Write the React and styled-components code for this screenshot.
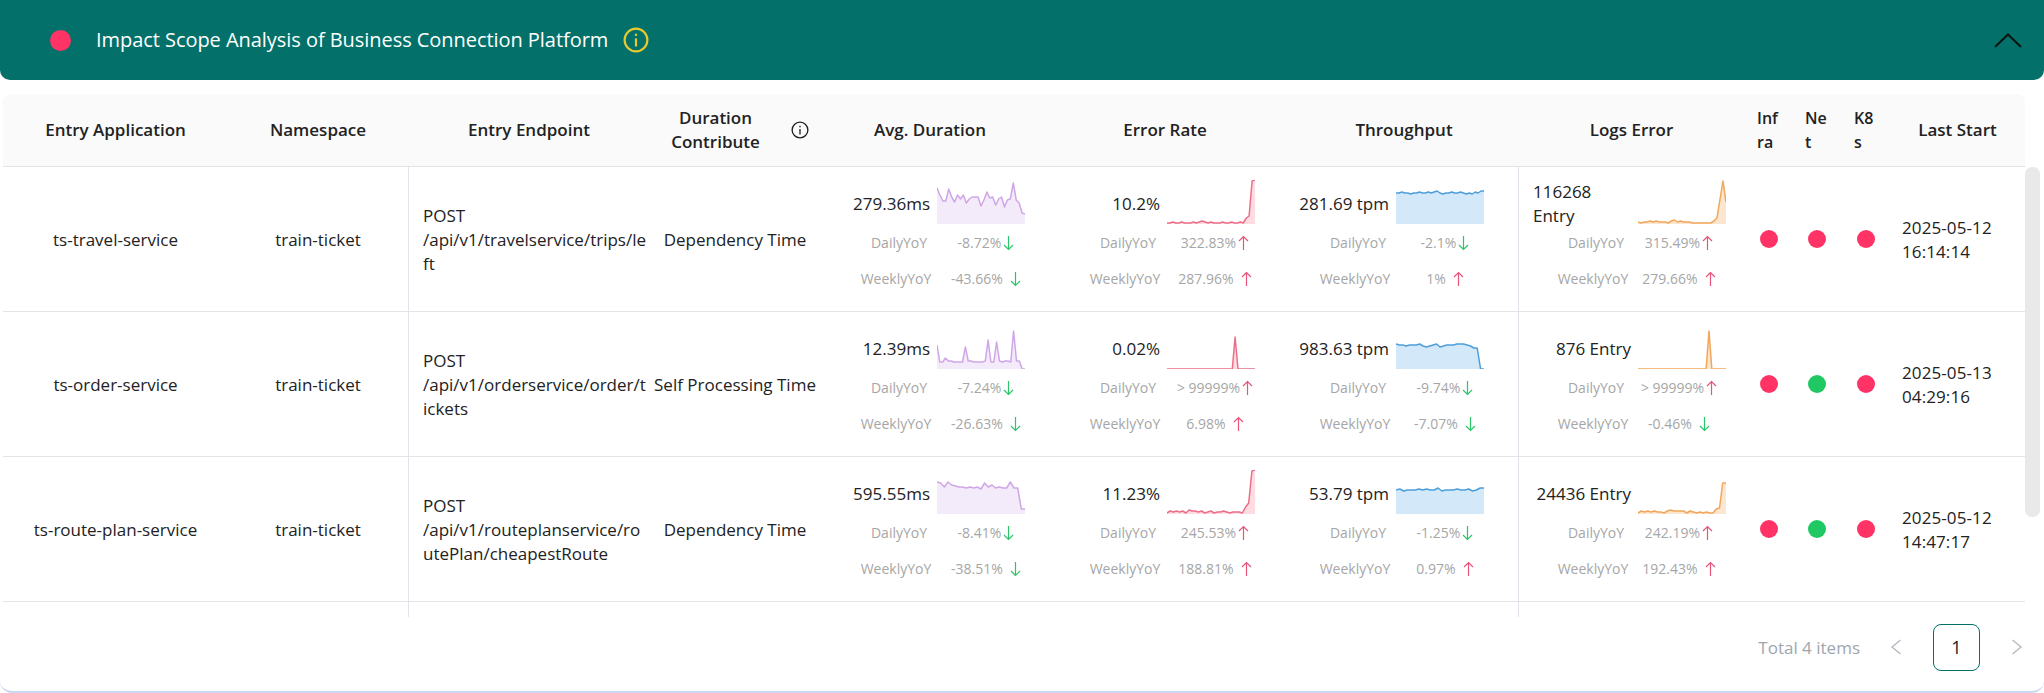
import styled, { createGlobalStyle } from 'styled-components';

const GlobalStyle = createGlobalStyle`
  html, body {
    margin: 0;
    padding: 0;
    background: #fff;
    font-family: "Open Sans", "Noto Sans", sans-serif;
    color: #222;
  }
`;

const Page = styled.div`
  width: 2044px;
  height: 693px;
  box-sizing: border-box;
  overflow: hidden;
  border-bottom: 2px solid #cbd8f0;
  border-radius: 0 0 12px 12px;
  background: #fff;
`;

const Banner = styled.div`
  height: 80px;
  background: #03716a;
  border-radius: 0 0 10px 10px;
  display: flex;
  align-items: center;
  padding: 0 22px 0 50px;
  color: #fff;
`;

const Dot = styled.span`
  display: block;
  flex: none;
  width: ${(p) => p.$size}px;
  height: ${(p) => p.$size}px;
  border-radius: 50%;
  background: ${(p) => (p.$ok ? '#20c863' : '#ff3366')};
`;

const BannerTitle = styled.div`
  margin-left: 25px;
  font-size: 20px;
  letter-spacing: -0.05px;
  line-height: 24px;
`;

const BannerInfo = styled.svg`
  margin-left: 15px;
  width: 26px;
  height: 26px;
  flex: none;
`;

const Chevron = styled.svg`
  margin-left: auto;
  width: 28px;
  height: 15px;
  flex: none;
`;

const TableArea = styled.div`
  display: flex;
  margin: 14px 4px 0 3px;
`;

const TableMain = styled.div`
  width: 2022px;
  flex: none;
`;

const Columns = styled.div`
  display: grid;
  grid-template-columns: 225px 180px 242px 170px 220px 250px 228px 227px 48px 49px 48px 135px;
`;

const HeadRow = styled(Columns)`
  height: 72px;
  background: #fafafa;
  border-bottom: 1px solid #e2e4e8;
  border-radius: 8px 8px 0 0;
  box-sizing: content-box;
  font-size: 17px;
  font-weight: 600;
  line-height: 24px;
`;

const HeadCell = styled.div`
  display: flex;
  align-items: center;
  justify-content: ${(p) => (p.$narrow ? 'flex-start' : 'center')};
  padding: 0 ${(p) => (p.$narrow ? 12 : 4)}px;
  text-align: center;
  word-break: break-all;
  ${(p) => p.$narrow && 'text-align: left; font-size: 16px;'}
`;

const DurationHead = styled(HeadCell)`
  justify-content: flex-start;
  padding: 0 11px 0 0;
`;

const DurationLabel = styled.span`
  flex: 1;
  padding: 0 10px 0 0;
  word-break: normal;
`;

const SmallInfo = styled.svg`
  width: 18px;
  height: 18px;
  flex: none;
`;

const BodyScroll = styled.div`
  height: 450px;
  overflow: hidden;
`;

const BodyRow = styled(Columns)`
  height: 144px;
  border-bottom: 1px solid #e2e4e8;
  font-size: 17px;
  line-height: 24px;
`;

const TextCell = styled.div`
  display: flex;
  align-items: center;
  justify-content: center;
  text-align: center;
  padding-top: 1px;
`;

const EndpointCell = styled.div`
  display: flex;
  align-items: center;
  padding: 1px 2px 0 14px;
  border-left: 1px solid #dfe3ea;
  word-break: break-all;
`;

const MetricCell = styled.div`
  padding-top: 13px;
  ${(p) => p.$divider && 'border-left: 1px solid #dfe3ea;'}
`;

const SparkLine = styled.div`
  height: 44px;
  display: flex;
  justify-content: flex-end;
  align-items: center;
  gap: 7px;
  padding-right: ${(p) => p.$right}px;
`;

const Value = styled.div`
  max-width: 98px;
  padding-top: 4px;
`;

const Spark = styled.svg`
  display: block;
  flex: none;
  width: 88px;
  height: 44px;
`;

const YoyRow = styled.div`
  height: 36px;
  box-sizing: border-box;
  padding-top: 2px;
  display: flex;
  align-items: center;
  justify-content: flex-end;
  gap: ${(p) => p.$gap}px;
  padding-right: ${(p) => p.$right}px;
  font-size: 14px;
  color: #a6a6a6;
`;

const YoyLabel = styled.div`
  width: 80px;
  box-sizing: border-box;
  text-align: center;
  padding-right: ${(p) => (p.$weekly ? 6 : 0)}px;
`;

const YoyValue = styled.div`
  width: 86px;
  display: flex;
  align-items: center;
  justify-content: center;
  white-space: nowrap;
`;

const Arrow = styled.svg`
  flex: none;
  width: 11px;
  height: 16px;
  margin-left: ${(p) => (p.$weekly ? 7 : 2)}px;
`;

const DotCell = styled.div`
  display: flex;
  align-items: center;
  padding-left: 15px;
`;

const DateCell = styled.div`
  display: flex;
  align-items: center;
  padding: 1px 12px 0;
  letter-spacing: 0.1px;
`;

const Scrollbar = styled.div`
  flex: none;
  width: 15px;
  height: 350px;
  margin-top: 73px;
  background: #e9e9e9;
  border-radius: 7px;
`;

const Pager = styled.div`
  display: flex;
  align-items: center;
  justify-content: flex-end;
  height: 48px;
  margin-top: 6px;
  padding-right: 21px;
  font-size: 17px;
  color: #a0a6ad;
`;

const PagerTotal = styled.span`
  margin-right: 30px;
`;

const PagerArrow = styled.svg`
  width: 12px;
  height: 16px;
  flex: none;
`;

const PageButton = styled.div`
  width: 47px;
  height: 47px;
  margin: 0 31px;
  box-sizing: border-box;
  display: flex;
  align-items: center;
  justify-content: center;
  border: 1px solid #03716a;
  border-radius: 8px;
  font-size: 18px;
  color: #222;
`;

const PURPLE = { line: '#cfa6e6', fill: '#f4ebfa' };
const RED = { line: '#ec6f8a', fill: '#ffdbe2' };
const BLUE = { line: '#4d9fdb', fill: '#d3e8f9' };
const ORANGE = { line: '#f2a65a', fill: '#fde6cf' };

const flatErr = [43, 43, 42, 43, 43, 42, 43, 43, 43, 42, 43, 42, 41, 42, 43, 42, 43, 43, 43, 42, 43, 43, 42, 43, 43, 42, 43];

const rows = [
  {
    app: 'ts-travel-service',
    endpoint: ['POST', '/api/v1/travelservice/trips/left'],
    duration: 'Dependency Time',
    dots: [false, false, false],
    date: ['2025-05-12', '16:14:14'],
    avg: {
      value: '279.36ms',
      daily: ['-8.72%', false],
      weekly: ['-43.66%', false],
      points: [8, 15, 21, 21, 9, 17, 22, 15, 19, 15, 23, 19, 17, 17, 17, 26, 20, 12, 18, 17, 25, 19, 17, 27, 20, 19, 3, 20, 23, 33, 34],
    },
    err: {
      value: '10.2%',
      daily: ['322.83%', true],
      weekly: ['287.96%', true],
      points: [...flatErr, 38, 36, 1, 0],
    },
    tp: {
      value: '281.69 tpm',
      daily: ['-2.1%', false],
      weekly: ['1%', true],
      points: [13, 13, 12, 13, 13, 14, 13, 13, 12, 13, 13, 12, 13, 12, 11, 13, 14, 13, 13, 12, 13, 13, 12, 13, 14, 13, 14, 12, 13, 11, 11],
    },
    logs: {
      value: '116268 Entry',
      daily: ['315.49%', true],
      weekly: ['279.66%', true],
      points: [42, 43, 42, 42, 41, 42, 41, 42, 42, 42, 43, 41, 40, 42, 41, 42, 42, 42, 43, 43, 43, 43, 43, 43, 43, 41, 38, 20, 1, 22],
    },
  },
  {
    app: 'ts-order-service',
    endpoint: ['POST', '/api/v1/orderservice/order/tickets'],
    duration: 'Self Processing Time',
    dots: [false, true, false],
    date: ['2025-05-13', '04:29:16'],
    avg: {
      value: '12.39ms',
      daily: ['-7.24%', false],
      weekly: ['-26.63%', false],
      points: [20, 37, 37, 33, 36, 36, 37, 37, 37, 37, 22, 36, 36, 37, 37, 37, 37, 36, 15, 37, 37, 17, 36, 37, 36, 36, 37, 6, 36, 36, 44, 44],
    },
    err: {
      value: '0.02%',
      daily: ['> 99999%', true],
      weekly: ['6.98%', true],
      points: [44, 44, 44, 44, 44, 44, 44, 44, 44, 44, 44, 44, 44, 44, 44, 44, 44, 44, 44, 44, 44, 44, 44, 44, 12, 44, 44, 44, 44, 44, 44, 44],
    },
    tp: {
      value: '983.63 tpm',
      daily: ['-9.74%', false],
      weekly: ['-7.07%', false],
      points: [19, 20, 20, 21, 20, 20, 20, 19, 21, 22, 21, 20, 19, 22, 21, 20, 20, 20, 19, 19, 19, 20, 21, 23, 23, 44, 44],
    },
    logs: {
      value: '876 Entry',
      daily: ['> 99999%', true],
      weekly: ['-0.46%', false],
      points: [44, 44, 44, 44, 44, 44, 44, 44, 44, 44, 44, 44, 44, 44, 44, 44, 44, 44, 44, 44, 44, 44, 44, 44, 44, 6, 44, 44, 44, 44, 44, 44],
    },
  },
  {
    app: 'ts-route-plan-service',
    endpoint: ['POST', '/api/v1/routeplanservice/routePlan/cheapestRoute'],
    duration: 'Dependency Time',
    dots: [false, true, false],
    date: ['2025-05-12', '14:47:17'],
    avg: {
      value: '595.55ms',
      daily: ['-8.41%', false],
      weekly: ['-38.51%', false],
      points: [12, 13, 17, 12, 15, 16, 17, 17, 18, 17, 18, 17, 19, 13, 17, 15, 18, 17, 18, 18, 12, 18, 18, 39, 39],
    },
    err: {
      value: '11.23%',
      daily: ['245.53%', true],
      weekly: ['188.81%', true],
      points: [43, 41, 42, 41, 42, 41, 43, 40, 41, 41, 42, 41, 43, 42, 41, 43, 42, 42, 41, 42, 43, 42, 42, 42, 43, 37, 33, 1, 0],
    },
    tp: {
      value: '53.79 tpm',
      daily: ['-1.25%', false],
      weekly: ['0.97%', true],
      points: [20, 19, 21, 20, 20, 20, 19, 20, 19, 20, 20, 18, 21, 20, 20, 20, 19, 20, 20, 19, 21, 20, 18, 18],
    },
    logs: {
      value: '24436 Entry',
      daily: ['242.19%', true],
      weekly: ['192.43%', true],
      points: [43, 41, 42, 41, 42, 41, 42, 42, 43, 41, 40, 41, 41, 41, 41, 43, 41, 42, 43, 42, 43, 42, 43, 43, 39, 38, 13, 13],
    },
  },
];

function Sparkline({ points, color }) {
  const step = 88 / (points.length - 1);
  const line = points.map((y, i) => `${(i * step).toFixed(1)},${y}`).join(' ');
  return (
    <Spark viewBox="0 0 88 44">
      <polygon points={`0,44 ${line} 88,44`} fill={color.fill} />
      <polyline points={line} fill="none" stroke={color.line} strokeWidth="1.5" strokeLinejoin="round" />
    </Spark>
  );
}

function TrendArrow({ up, weekly }) {
  return (
    <Arrow $weekly={weekly} viewBox="0 0 11 16" fill="none" stroke={up ? '#e8537a' : '#2cc46a'} strokeWidth="1.2">
      {up ? <path d="M5.5 15V1.5M1 6l4.5-4.5L10 6" /> : <path d="M5.5 1v13.5M1 10l4.5 4.5L10 10" />}
    </Arrow>
  );
}

function Metric({ data, color, sparkRight, yoyRight, gap = 4, divider }) {
  return (
    <MetricCell $divider={divider}>
      <SparkLine $right={sparkRight}>
        <Value>{data.value}</Value>
        <Sparkline points={data.points} color={color} />
      </SparkLine>
      <YoyRow $right={yoyRight} $gap={gap}>
        <YoyLabel>DailyYoY</YoyLabel>
        <YoyValue>
          {data.daily[0]}
          <TrendArrow up={data.daily[1]} />
        </YoyValue>
      </YoyRow>
      <YoyRow $right={yoyRight} $gap={gap}>
        <YoyLabel $weekly>WeeklyYoY</YoyLabel>
        <YoyValue>
          {data.weekly[0]}
          <TrendArrow up={data.weekly[1]} weekly />
        </YoyValue>
      </YoyRow>
    </MetricCell>
  );
}

function InfoIcon({ as: Comp, stroke, strokeWidth }) {
  return (
    <Comp viewBox="0 0 24 24" fill="none" stroke={stroke} strokeWidth={strokeWidth}>
      <circle cx="12" cy="12" r="10.5" />
      <path d="M12 10.5V18" />
      <path d="M12 6.2v2" />
    </Comp>
  );
}

export default function App() {
  return (
    <>
      <GlobalStyle />
      <Page>
        <Banner>
          <Dot $size={21} />
          <BannerTitle>Impact Scope Analysis of Business Connection Platform</BannerTitle>
          <InfoIcon as={BannerInfo} stroke="#e9c92f" strokeWidth="2" />
          <Chevron viewBox="0 0 28 15" fill="none" stroke="#0a1413" strokeWidth="2">
            <path d="M1 14L14 1.5 27 14" />
          </Chevron>
        </Banner>
        <TableArea>
          <TableMain>
            <HeadRow>
              <HeadCell>Entry Application</HeadCell>
              <HeadCell>Namespace</HeadCell>
              <HeadCell>Entry Endpoint</HeadCell>
              <DurationHead>
                <DurationLabel>Duration Contribute</DurationLabel>
                <InfoIcon as={SmallInfo} stroke="#222" strokeWidth="1.8" />
              </DurationHead>
              <HeadCell>Avg. Duration</HeadCell>
              <HeadCell>Error Rate</HeadCell>
              <HeadCell>Throughput</HeadCell>
              <HeadCell>Logs Error</HeadCell>
              <HeadCell $narrow>Infra</HeadCell>
              <HeadCell $narrow>Net</HeadCell>
              <HeadCell $narrow>K8s</HeadCell>
              <HeadCell>Last Start</HeadCell>
            </HeadRow>
            <BodyScroll>
              {rows.map((row) => (
                <BodyRow key={row.app}>
                  <TextCell>{row.app}</TextCell>
                  <TextCell>train-ticket</TextCell>
                  <EndpointCell>
                    <div>
                      {row.endpoint[0]}
                      <br />
                      {row.endpoint[1]}
                    </div>
                  </EndpointCell>
                  <TextCell>{row.duration}</TextCell>
                  <Metric data={row.avg} color={PURPLE} sparkRight={15} yoyRight={11} />
                  <Metric data={row.err} color={RED} sparkRight={35} yoyRight={32} />
                  <Metric data={row.tp} color={BLUE} sparkRight={34} yoyRight={30} />
                  <Metric data={row.logs} color={ORANGE} sparkRight={19} yoyRight={23} gap={0} divider />
                  {row.dots.map((ok, i) => (
                    <DotCell key={i}>
                      <Dot $size={18} $ok={ok} />
                    </DotCell>
                  ))}
                  <DateCell>
                    <div>
                      {row.date[0]}
                      <br />
                      {row.date[1]}
                    </div>
                  </DateCell>
                </BodyRow>
              ))}
              <BodyRow>
                <div />
                <div />
                <EndpointCell />
                <div />
                <div />
                <div />
                <div />
                <MetricCell $divider />
              </BodyRow>
            </BodyScroll>
          </TableMain>
          <Scrollbar />
        </TableArea>
        <Pager>
          <PagerTotal>Total 4 items</PagerTotal>
          <PagerArrow viewBox="0 0 12 16" fill="none" stroke="#b5bac0" strokeWidth="1.4">
            <path d="M10.5 1L2 8l8.5 7" />
          </PagerArrow>
          <PageButton>1</PageButton>
          <PagerArrow viewBox="0 0 12 16" fill="none" stroke="#b5bac0" strokeWidth="1.4">
            <path d="M1.5 1L10 8l-8.5 7" />
          </PagerArrow>
        </Pager>
      </Page>
    </>
  );
}
